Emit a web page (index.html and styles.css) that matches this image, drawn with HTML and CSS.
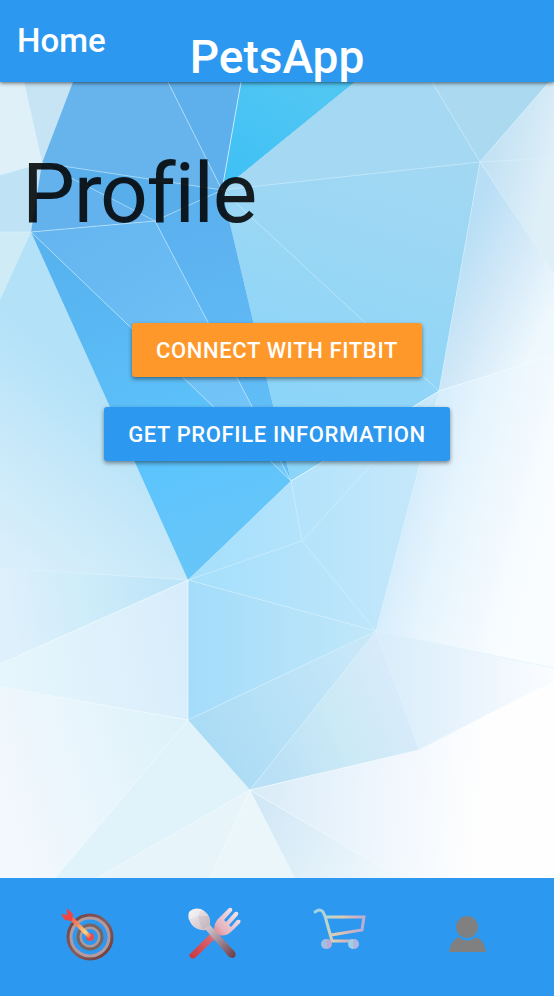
FILE: index.html
```html
<!DOCTYPE html>
<html lang="en">
<head>
<meta charset="utf-8">
<meta name="viewport" content="width=device-width, initial-scale=1">
<title>PetsApp</title>
<link rel="stylesheet" href="styles.css">
</head>
<body>
<header class="topbar">
  <a class="home" href="#">Home</a>
  <span class="brand">PetsApp</span>
</header>
<main class="profile">
  <svg class="backdrop" viewBox="0 82 554 796" preserveAspectRatio="none" aria-hidden="true">
    <defs>
      <linearGradient id="left" gradientUnits="userSpaceOnUse" x1="115" y1="400" x2="0" y2="540"><stop offset="0" stop-color="#b2e1f8"/><stop offset=".55" stop-color="#c8e9f9"/><stop offset="1" stop-color="#d8eefb"/></linearGradient>
      <linearGradient id="left2" gradientUnits="userSpaceOnUse" x1="170" y1="580" x2="10" y2="610"><stop offset="0" stop-color="#bde4f9"/><stop offset=".5" stop-color="#cdecf9"/><stop offset="1" stop-color="#ddf0fb"/></linearGradient>
      <linearGradient id="deep" gradientUnits="userSpaceOnUse" x1="60" y1="250" x2="190" y2="580"><stop offset="0" stop-color="#57b2ee"/><stop offset=".7" stop-color="#5dc4fc"/><stop offset="1" stop-color="#68c6f8"/></linearGradient>
      <linearGradient id="cyan" gradientUnits="userSpaceOnUse" x1="290" y1="82" x2="230" y2="185"><stop offset="0" stop-color="#50c6f3"/><stop offset="1" stop-color="#3fc0f5"/></linearGradient>
      <linearGradient id="mid" gradientUnits="userSpaceOnUse" x1="100" y1="200" x2="260" y2="440"><stop offset="0" stop-color="#65b5f0"/><stop offset="1" stop-color="#74c7f9"/></linearGradient>
      <linearGradient id="mid2" gradientUnits="userSpaceOnUse" x1="200" y1="200" x2="260" y2="440"><stop offset="0" stop-color="#5bb0ee"/><stop offset="1" stop-color="#62bff8"/></linearGradient>
      <linearGradient id="sky" gradientUnits="userSpaceOnUse" x1="400" y1="100" x2="300" y2="420"><stop offset="0" stop-color="#a6d8f1"/><stop offset="1" stop-color="#8bd5f9"/></linearGradient>
      <linearGradient id="ne" gradientUnits="userSpaceOnUse" x1="480" y1="140" x2="554" y2="160"><stop offset="0" stop-color="#bddff3"/><stop offset="1" stop-color="#dfeff8"/></linearGradient>
      <linearGradient id="east" gradientUnits="userSpaceOnUse" x1="450" y1="260" x2="554" y2="310"><stop offset="0" stop-color="#b7def5"/><stop offset=".5" stop-color="#d3e9f8"/><stop offset="1" stop-color="#eff8fd"/></linearGradient>
      <linearGradient id="east2" gradientUnits="userSpaceOnUse" x1="400" y1="500" x2="540" y2="540"><stop offset="0" stop-color="#d3ebfb"/><stop offset=".35" stop-color="#e6f4fd"/><stop offset="1" stop-color="#fafdff"/></linearGradient>
      <linearGradient id="east3" gradientUnits="userSpaceOnUse" x1="385" y1="680" x2="554" y2="680"><stop offset="0" stop-color="#d9edfa"/><stop offset=".5" stop-color="#eaf4fd"/><stop offset="1" stop-color="#fbfdff"/></linearGradient>
      <linearGradient id="south" gradientUnits="userSpaceOnUse" x1="250" y1="790" x2="480" y2="810"><stop offset="0" stop-color="#d8ebf7"/><stop offset=".5" stop-color="#edf5fd"/><stop offset="1" stop-color="#fefefe"/></linearGradient>
      <linearGradient id="south2" gradientUnits="userSpaceOnUse" x1="260" y1="810" x2="390" y2="878"><stop offset="0" stop-color="#d2e8f6"/><stop offset="1" stop-color="#f0f8fc"/></linearGradient>
      <linearGradient id="ice" gradientUnits="userSpaceOnUse" x1="220" y1="540" x2="430" y2="540"><stop offset="0" stop-color="#a8e0fc"/><stop offset="1" stop-color="#c7e8fa"/></linearGradient>
      <linearGradient id="ice2" gradientUnits="userSpaceOnUse" x1="188" y1="640" x2="370" y2="640"><stop offset="0" stop-color="#a3dcfa"/><stop offset="1" stop-color="#c0e7f9"/></linearGradient>
      <linearGradient id="ice3" gradientUnits="userSpaceOnUse" x1="210" y1="740" x2="360" y2="660"><stop offset="0" stop-color="#abdcf5"/><stop offset="1" stop-color="#c7e7f9"/></linearGradient>
      <linearGradient id="ice4" gradientUnits="userSpaceOnUse" x1="270" y1="770" x2="410" y2="710"><stop offset="0" stop-color="#b9e0f6"/><stop offset=".5" stop-color="#cbe9f6"/><stop offset="1" stop-color="#d8ebfa"/></linearGradient>
      <linearGradient id="west" gradientUnits="userSpaceOnUse" x1="0" y1="680" x2="188" y2="640"><stop offset="0" stop-color="#e6f6fc"/><stop offset="1" stop-color="#d8edfb"/></linearGradient>
      <linearGradient id="sw" gradientUnits="userSpaceOnUse" x1="0" y1="800" x2="180" y2="740"><stop offset="0" stop-color="#f3f8fe"/><stop offset="1" stop-color="#def2fa"/></linearGradient>
    </defs>
    <rect y="82" width="554" height="796" fill="#e6f4fb"/>
    <path fill="#e0f0f8" d="M0 82H24L42 163 0 175z"/>
    <path fill="#c6e4f3" d="M24 82H73L42 163z"/>
    <path fill="#bfe3f5" d="M0 175 42 163 31 232H0z"/>
    <path fill="#ceebf6" d="M0 232H31L0 300z"/>
    <path fill="url(#left)" d="M0 300 31 232 188 580 0 568z"/>
    <path fill="#67b4ed" d="M73 82H168L222 190 42 163z"/>
    <path fill="#5eb0ed" d="M168 82H241L222 190z"/>
    <path fill="url(#cyan)" d="M241 82H355L222 190z"/>
    <path fill="url(#sky)" d="M355 82H432L480 162 439 391 291 481 222 190z"/>
    <path fill="#a5d8f2" d="M355 82H432L480 162 222 190z"/>
    <path fill="#abd9f0" d="M432 82H549L480 162z"/>
    <path fill="url(#ne)" d="M549 82H554V273L480 162z"/>
    <path fill="url(#east)" d="M480 162 554 273V355L439 391z"/>
    <path fill="#64b2ed" d="M42 163 222 190 155 221 31 232z"/>
    <path fill="#58adeb" d="M42 163 222 190 155 221z"/>
    <path fill="url(#mid)" d="M31 232 155 221 291 481z"/>
    <path fill="url(#mid2)" d="M155 221 222 190 291 481z"/>
    <path fill="url(#deep)" d="M31 232 291 481 188 580z"/>
    <path fill="url(#ice)" d="M291 481 439 391 376 631 188 580z"/>
    <path fill="url(#east2)" d="M439 391 554 355V668L376 631z"/>
    <path fill="url(#east3)" d="M376 631 554 668V680L419 750z"/>
    <path fill="url(#ice2)" d="M188 580 376 631 188 720z"/>
    <path fill="url(#ice3)" d="M188 720 376 631 250 790z"/>
    <path fill="url(#ice4)" d="M376 631 419 750 250 790z"/>
    <path fill="url(#south)" d="M250 790 419 750 554 680V878H400z"/>
    <path fill="url(#south2)" d="M250 790 400 878H295z"/>
    <path fill="#ebf6fa" d="M250 790 295 878H210z"/>
    <path fill="#e7f4fa" d="M250 790 210 878H97z"/>
    <path fill="#e0f3fa" d="M188 720 250 790 97 878H55z"/>
    <path fill="url(#sw)" d="M188 720 55 878H0V687z"/>
    <path fill="url(#west)" d="M188 580V720L0 687V664z"/>
    <path fill="url(#left2)" d="M0 568 188 580 0 664z"/>
    <g class="seams">
      <path d="M24 82 42 163 0 175M42 163 222 190 155 221 31 232H0M168 82 222 190M42 163 155 221 291 481M31 232 291 481M432 82 480 162 554 158M549 82 480 162 554 273M480 162 222 190 439 391M439 391 302 541 291 481M188 580 302 541 376 631 439 391M0 568 188 580 376 631 554 668M188 720 376 631 250 790M376 631 419 750M480 162 439 391 480 490"/>
      <path class="bright" d="M241 82 222 190M291 481 439 391 554 355M0 664 188 580V720M250 790 419 750 554 680M0 687 188 720 55 878M97 878 250 790 210 878M250 790 400 878"/>
    </g>
  </svg>
  <h1 class="title">Profile</h1>
  <div class="actions">
    <button class="btn btn-fitbit" type="button">Connect with Fitbit</button>
    <button class="btn btn-info" type="button">Get profile information</button>
  </div>
</main>
<nav class="tabbar">
  <a class="tab" href="#" aria-label="Goals">
    <svg viewBox="0 0 56 56">
      <defs>
        <linearGradient id="ring" x1="0" y1="0" x2="1" y2="1"><stop offset="0" stop-color="#6f4143"/><stop offset=".5" stop-color="#875e62"/><stop offset="1" stop-color="#6b3834"/></linearGradient>
        <linearGradient id="shaft" gradientUnits="userSpaceOnUse" x1="8" y1="7" x2="31" y2="30"><stop offset="0" stop-color="#ef4b49"/><stop offset=".45" stop-color="#f2875c"/><stop offset=".8" stop-color="#fbd582"/><stop offset="1" stop-color="#ed6a56"/></linearGradient>
      </defs>
      <g fill="none">
        <circle cx="31" cy="30" r="20" stroke="#b39a9f" stroke-width="5"/>
        <circle cx="31" cy="30" r="22" stroke="url(#ring)" stroke-width="3"/>
        <circle cx="31" cy="30" r="10" stroke="#ab9c9f" stroke-width="4"/>
        <circle cx="31" cy="30" r="12" stroke="#7a6461" stroke-width="3"/>
      </g>
      <circle cx="31" cy="30" r="4" fill="#e84d4d"/>
      <path stroke="url(#shaft)" stroke-width="4" d="M9 8 31 30"/>
      <path fill="#f04444" d="M2 7 8 8 8 1 14 7 13 14 6 13z"/>
    </svg>
  </a>
  <a class="tab" href="#" aria-label="Food">
    <svg viewBox="0 0 56 56">
      <defs>
        <linearGradient id="fork" gradientUnits="userSpaceOnUse" x1="5" y1="50" x2="52" y2="5"><stop offset="0" stop-color="#cf3841"/><stop offset=".4" stop-color="#d8636c"/><stop offset=".65" stop-color="#e5b4bf"/><stop offset="1" stop-color="#f4e4ea"/></linearGradient>
        <linearGradient id="spoon" gradientUnits="userSpaceOnUse" x1="5" y1="4" x2="48" y2="50"><stop offset="0" stop-color="#efebee"/><stop offset=".4" stop-color="#cdbfc6"/><stop offset=".65" stop-color="#a08b98"/><stop offset="1" stop-color="#713d45"/></linearGradient>
      </defs>
      <path fill="url(#fork)" d="M5 46 28 23Q28 15 34 10L43 1Q47 0 46 4L38 13 40 15 49 5Q53 4 52 8L43 18 45 20 51 13Q56 12 54 16L46 24Q40 30 33 28L10 50Q7 53 4 50 2 48 5 46z"/>
      <path fill="url(#spoon)" d="M3 5Q8 0 15 2 23 6 24 13L24 18 49 45Q51 49 47 51L43 50 20 23Q11 24 6 18 1 11 3 5z"/>
      <path fill="#fff" opacity=".3" d="M2 13 12 9 15 2 7 2 3 5z"/>
      <path fill="#9e929d" opacity=".2" d="M12 9 23 9 24 18 16 23z"/>
    </svg>
  </a>
  <a class="tab" href="#" aria-label="Shop">
    <svg viewBox="0 0 56 56">
      <defs>
        <linearGradient id="cart" gradientUnits="userSpaceOnUse" x1="2" y1="10" x2="54" y2="25"><stop offset="0" stop-color="#9fd0e4"/><stop offset=".25" stop-color="#b9d7cf"/><stop offset=".5" stop-color="#dfcbb0"/><stop offset=".75" stop-color="#cbb1c4"/><stop offset="1" stop-color="#abaee0"/></linearGradient>
      </defs>
      <path fill="none" stroke="url(#cart)" stroke-width="3" stroke-linecap="round" d="M3 5Q8 1 11 5L13 9 20 34H43M14 10H52L50 23 19 28"/>
      <circle cx="14" cy="37" r="5" fill="#a2bfe2"/>
      <path fill="#bda9d6" d="M15 32A5 5 0 0 1 15 42z"/>
      <circle cx="42" cy="37" r="5" fill="#adb7e0"/>
      <path fill="#9ed0eb" d="M41 32A5 5 0 0 0 41 42z"/>
    </svg>
  </a>
  <a class="tab" href="#" aria-label="Profile">
    <svg viewBox="0 0 56 56" fill="#808080">
      <circle cx="28" cy="20" r="11"/>
      <path d="M19 30Q28 37 38 30 46 35 47 45H10Q11 35 19 30z"/>
    </svg>
  </a>
</nav>
</body>
</html>
```

FILE: styles.css
```css
* {
  box-sizing: border-box;
}

body {
  margin: 0;
  min-height: 100vh;
  display: flex;
  flex-direction: column;
  font-family: Roboto, "Liberation Sans", sans-serif;
  color: #fff;
}

.topbar {
  position: relative;
  z-index: 1;
  display: grid;
  grid-template-columns: 1fr auto 1fr;
  align-items: center;
  padding: 0 17px;
  background: #2c98f0;
  box-shadow: 0 1px 4px rgba(0, 0, 0, 0.6);
}

.home {
  color: inherit;
  font-size: 33px;
  line-height: 82px;
  font-weight: 500;
  text-decoration: none;
}

.brand {
  padding-top: 32px;
  font-size: 46px;
  line-height: 50px;
  font-weight: 500;
}

.profile {
  position: relative;
  flex: 1;
}

.backdrop {
  position: absolute;
  inset: 0;
  width: 100%;
  height: 100%;
}

.seams {
  fill: none;
  stroke: #dcf6ff;
  stroke-opacity: 0.5;
}

.bright {
  stroke: #f4fcff;
  stroke-opacity: 0.65;
}

.title {
  position: relative;
  margin: 0;
  padding: 62px 22px 0;
  color: rgba(0, 0, 0, 0.87);
  font-size: 84px;
  line-height: 100px;
  font-weight: 400;
  letter-spacing: -0.01562em;
}

.actions {
  position: relative;
  display: flex;
  flex-direction: column;
  align-items: center;
  gap: 30px;
  padding-top: 79px;
}

.btn {
  border: 0;
  border-radius: 3px;
  padding: 2px 24px 0;
  color: #fff;
  font: 500 22px/52px Roboto, "Liberation Sans", sans-serif;
  letter-spacing: 0.02857em;
  text-transform: uppercase;
  box-shadow: 0 2px 4px rgba(0, 0, 0, 0.45);
}

.btn-fitbit {
  background: #ff982a;
}

.btn-info {
  background: #2c98f0;
}

.tabbar {
  display: flex;
  padding: 29px 24px 33px;
  background: #2c98f0;
}

.tab {
  flex: 1;
  display: flex;
  justify-content: center;
}

.tab svg {
  width: 56px;
  height: 56px;
}
```
